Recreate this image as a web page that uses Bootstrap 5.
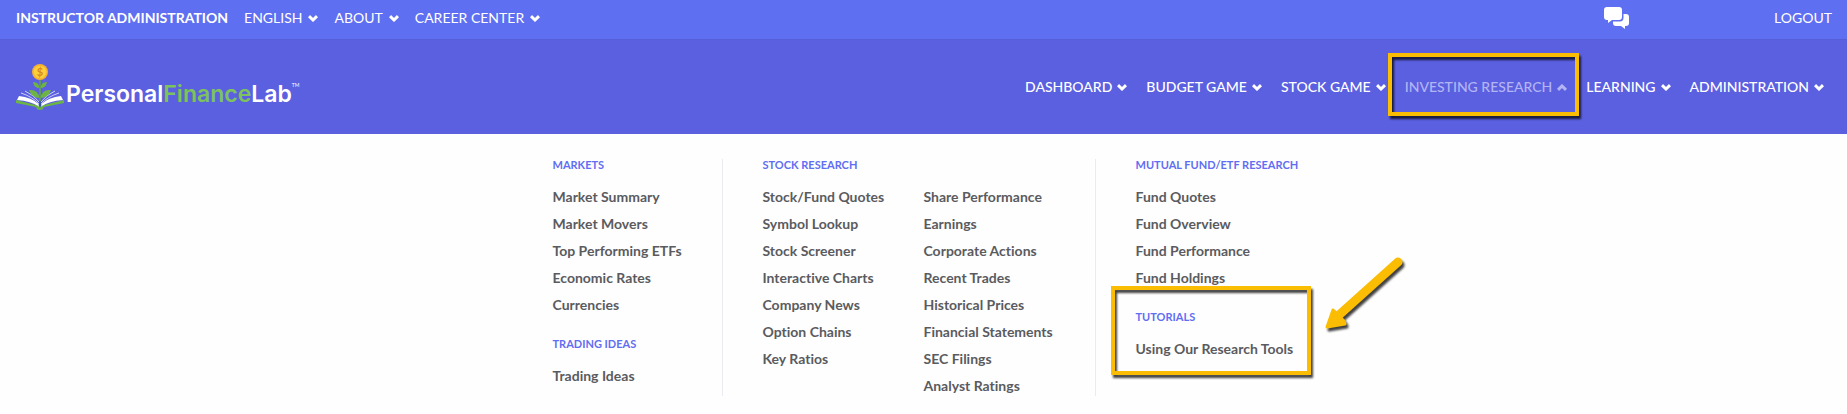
<!DOCTYPE html>
<html lang="en">
<head>
<meta charset="utf-8">
<meta name="viewport" content="width=device-width, initial-scale=1">
<title>PersonalFinanceLab</title>
<link href="https://cdn.jsdelivr.net/npm/bootstrap@5.3.0/dist/css/bootstrap.min.css" rel="stylesheet">
<style>
  body { font-family: Lato, sans-serif; font-size: 14px; font-variant-ligatures: none; background: #fefefe; }
  a { color: inherit; text-decoration: none; }
  .topbar { background: #5f6ff1; min-height: 40px; padding: 0 15px 4px 16px; gap: 16px; border-bottom: 1px solid #5660d6; }
  .topbar a, .main-nav a { line-height: 20px; white-space: nowrap; }
  .chat-link { margin-right: 144px; }
  .site-header { background: #5b60e0; min-height: 94px; padding: 0 23px 1px 16px; }
  .main-nav { gap: 19px; font-weight: 500; }
  .main-nav .active-item { position: relative; color: #b3b4f3; }
  .logo-text { font-family: Inter, sans-serif; font-weight: 600; font-size: 23px; line-height: 28px; color: #fff; margin: 14px 0 0 2px; }
  .logo-green { color: #7dc35b; }
  .logo-tm { font-size: 5px; line-height: 8px; margin-top: 17px; color: #fff; }
  .chev { width: 10px; height: 7px; margin-left: 5px; fill: none; stroke: currentColor; stroke-width: 3; }
  .topbar .chev { margin-left: 6px; }
  .callout { position: absolute; border: 4px solid #fbbc04; pointer-events: none; filter: drop-shadow(2px 3px 1px rgba(0,0,0,.75)); }
  .active-item .callout { inset: -24px -12px -19px -17px; }
  .tutorials .callout { inset: -25px -16px -16px -25px; }
  .mega { padding: 25px 0 20px; color: #5a5b60; font-weight: 700; font-size: 14px; }
  .mega h2 { color: #616df2; font-size: 11px; line-height: 11px; font-weight: 700; margin: 0 0 17px; white-space: nowrap; }
  .mega li { line-height: 20px; white-space: nowrap; }
  .mega li + li { margin-top: 7px; }
  .mega ul { margin: 0; }
  .col-markets { width: 170px; border-right: 1px solid #e9ebf1; }
  .col-stock { padding-left: 40px; width: 373px; border-right: 1px solid #e9ebf1; }
  .col-funds { padding-left: 40px; width: 199px; }
  .stock-list { width: 161px; }
  .mega .group-next { margin-top: 23px; }
  .tutorials { position: relative; }
  .arrow { position: absolute; left: 186px; top: -54px; width: 90px; height: 84px; filter: drop-shadow(2px 3px 1px rgba(0,0,0,.75)); pointer-events: none; }
</style>
</head>
<body>
<svg class="d-none"><symbol id="down" viewBox="0 0 10 7"><path d="M1 1.2 5 5 9 1.2"/></symbol><symbol id="up" viewBox="0 0 10 7"><path d="M1 5.8 5 2 9 5.8"/></symbol></svg>
<nav class="topbar d-flex align-items-center text-white" aria-label="Account">
  <a href="#" class="fw-bold">INSTRUCTOR ADMINISTRATION</a>
  <a href="#">ENGLISH<svg class="chev"><use href="#down"/></svg></a>
  <a href="#">ABOUT<svg class="chev"><use href="#down"/></svg></a>
  <a href="#">CAREER CENTER<svg class="chev"><use href="#down"/></svg></a>
  <div class="ms-auto d-flex align-items-center">
    <a href="#" class="chat-link d-flex" aria-label="Messages"><svg width="26" height="22" viewBox="0 0 26 22" fill="#fff"><path d="M3 0h12q3 0 3 3v7q0 3-3 3H8l-4 3v-3H3q-3 0-3-3V3q0-3 3-3z"/><path d="M19.500 7H22q3 0 3 3v6q0 3-3 3h-1v3l-4-3h-5q-3 0-3-3v-1.500h7q3.500 0 3.500-4z"/></svg></a>
    <a href="#">LOGOUT</a>
  </div>
</nav>
<header class="site-header d-flex align-items-center justify-content-between text-white">
  <a href="#" class="d-flex align-items-center">
    <svg width="48" height="46" viewBox="0 0 48 46" aria-hidden="true">
      <path d="M0 36 20 41Q24 43 28 41L48 36V39L28 43Q27 46 24 46T20 43L0 39z" fill="#6cb544"/>
      <path d="M3 32Q15 33 24 41Q33 33 45 32L47 36Q33 37 24 43Q15 37 1 36z" fill="#fff"/>
      <path d="M5 29Q17 33 23 40M9 27Q18 31 23 38M43 29Q31 33 25 40M39 27Q30 31 25 38" stroke="#fff" fill="none" stroke-width=".7"/>
      <path d="M23.300 14h1.500v24h-1.500z" fill="#5da83e"/>
      <path d="M23.500 24Q18 24 17 18Q23 18 23.500 24zM24.500 24Q30 24 31 18Q25 18 24.500 24zM23.500 34Q16 34 13 26Q22 25 23.500 34zM24.500 34Q32 34 35 26Q26 25 24.500 34z" fill="#6cb544"/>
      <path d="M23.500 37h1l1 4-1.500 3-1.500-3z" fill="#3556a5"/>
      <circle cx="24" cy="8" r="8" fill="#f6b130"/><circle cx="24" cy="8" r="6.300" fill="#fdcf39"/>
      <text x="24" y="12" text-anchor="middle" font-family="Lato, sans-serif" font-weight="700" font-size="11" fill="#d98a22">$</text>
    </svg>
    <span class="logo-text">Personal<span class="logo-green">Finance</span>Lab</span><span class="logo-tm align-self-start">TM</span>
  </a>
  <nav class="main-nav d-flex" aria-label="Main">
    <a href="#">DASHBOARD<svg class="chev"><use href="#down"/></svg></a>
    <a href="#">BUDGET GAME<svg class="chev"><use href="#down"/></svg></a>
    <a href="#">STOCK GAME<svg class="chev"><use href="#down"/></svg></a>
    <a href="#" class="active-item" aria-expanded="true">INVESTING RESEARCH<svg class="chev"><use href="#up"/></svg><span class="callout"></span></a>
    <a href="#">LEARNING<svg class="chev"><use href="#down"/></svg></a>
    <a href="#">ADMINISTRATION<svg class="chev"><use href="#down"/></svg></a>
  </nav>
</header>
<main class="mega d-flex justify-content-center">
  <section class="col-markets">
    <h2>MARKETS</h2>
    <ul class="list-unstyled">
      <li><a href="#">Market Summary</a></li><li><a href="#">Market Movers</a></li><li><a href="#">Top Performing ETFs</a></li><li><a href="#">Economic Rates</a></li><li><a href="#">Currencies</a></li>
    </ul>
    <h2 class="group-next">TRADING IDEAS</h2>
    <ul class="list-unstyled"><li><a href="#">Trading Ideas</a></li></ul>
  </section>
  <section class="col-stock">
    <h2>STOCK RESEARCH</h2>
    <div class="d-flex">
      <ul class="list-unstyled stock-list">
        <li><a href="#">Stock/Fund Quotes</a></li><li><a href="#">Symbol Lookup</a></li><li><a href="#">Stock Screener</a></li><li><a href="#">Interactive Charts</a></li><li><a href="#">Company News</a></li><li><a href="#">Option Chains</a></li><li><a href="#">Key Ratios</a></li>
      </ul>
      <ul class="list-unstyled">
        <li><a href="#">Share Performance</a></li><li><a href="#">Earnings</a></li><li><a href="#">Corporate Actions</a></li><li><a href="#">Recent Trades</a></li><li><a href="#">Historical Prices</a></li><li><a href="#">Financial Statements</a></li><li><a href="#">SEC Filings</a></li><li><a href="#">Analyst Ratings</a></li>
      </ul>
    </div>
  </section>
  <section class="col-funds">
    <h2>MUTUAL FUND/ETF RESEARCH</h2>
    <ul class="list-unstyled">
      <li><a href="#">Fund Quotes</a></li><li><a href="#">Fund Overview</a></li><li><a href="#">Fund Performance</a></li><li><a href="#">Fund Holdings</a></li>
    </ul>
    <div class="tutorials group-next">
      <h2>TUTORIALS</h2>
      <ul class="list-unstyled"><li><a href="#">Using Our Research Tools</a></li></ul>
      <span class="callout"></span>
      <svg class="arrow" viewBox="0 0 90 84" aria-hidden="true"><path d="M76 5 17 58" stroke="#fbbc04" stroke-width="9" stroke-linecap="round"/><path d="M5 70 11 53 22 64 23 67z" fill="#fbbc04" stroke="#fbbc04" stroke-width="3" stroke-linejoin="round"/></svg>
    </div>
  </section>
</main>
<script src="https://cdn.jsdelivr.net/npm/bootstrap@5.3.0/dist/js/bootstrap.bundle.min.js"></script>
</body>
</html>
